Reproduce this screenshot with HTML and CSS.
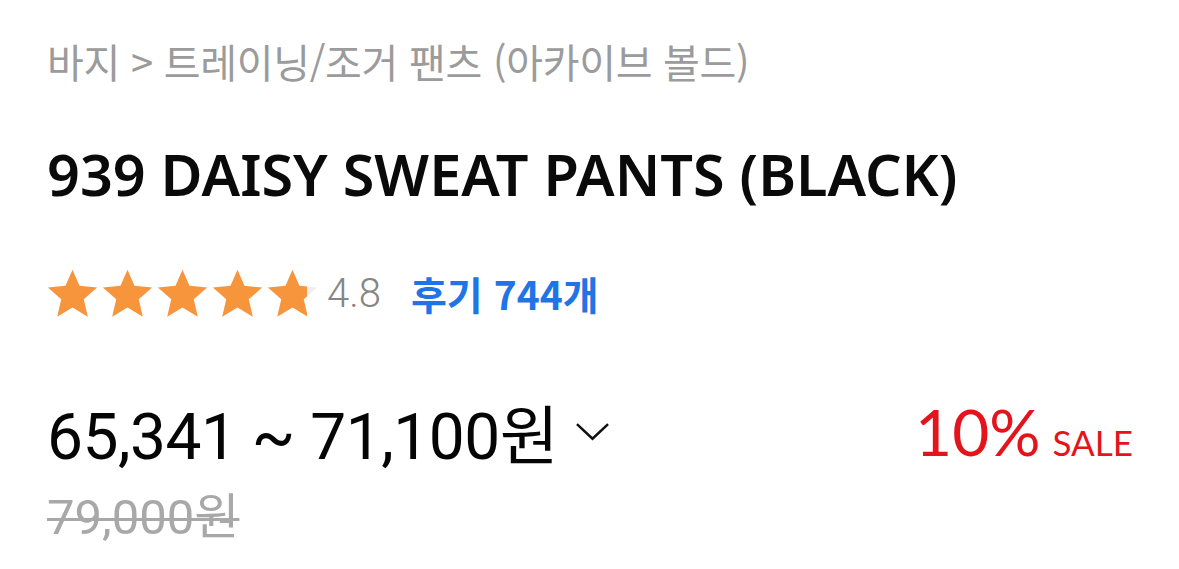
FILE: index.html
```html
<!DOCTYPE html>
<html lang="ko">
<head>
<meta charset="utf-8">
<link rel="stylesheet" href="styles.css">
</head>
<body>
<div class="page">
  <div class="crumb">바지 &gt; 트레이닝/조거 팬츠 (아카이브 볼드)</div>
  <h1 class="title">939 DAISY SWEAT PANTS (BLACK)</h1>
  <div class="rating">
    <div class="stars">
      <svg class="star" viewBox="0 0 24 24"><path d="M12 0.8l3.3 7.6 8.3.8-6.3 5.5 1.9 8.2L12 18.6l-7.2 4.3 1.9-8.2L.4 9.2l8.3-.8z" fill="#f7953d"/></svg>
      <svg class="star" viewBox="0 0 24 24"><path d="M12 0.8l3.3 7.6 8.3.8-6.3 5.5 1.9 8.2L12 18.6l-7.2 4.3 1.9-8.2L.4 9.2l8.3-.8z" fill="#f7953d"/></svg>
      <svg class="star" viewBox="0 0 24 24"><path d="M12 0.8l3.3 7.6 8.3.8-6.3 5.5 1.9 8.2L12 18.6l-7.2 4.3 1.9-8.2L.4 9.2l8.3-.8z" fill="#f7953d"/></svg>
      <svg class="star" viewBox="0 0 24 24"><path d="M12 0.8l3.3 7.6 8.3.8-6.3 5.5 1.9 8.2L12 18.6l-7.2 4.3 1.9-8.2L.4 9.2l8.3-.8z" fill="#f7953d"/></svg>
      <svg class="star" viewBox="0 0 24 24"><defs><linearGradient id="part" x1="0" x2="1" y1="0" y2="0"><stop offset="0.8" stop-color="#f7953d"/><stop offset="0.8" stop-color="#efefef"/></linearGradient></defs><path d="M12 0.8l3.3 7.6 8.3.8-6.3 5.5 1.9 8.2L12 18.6l-7.2 4.3 1.9-8.2L.4 9.2l8.3-.8z" fill="url(#part)"/></svg>
    </div>
    <span class="score">4.8</span>
    <span class="reviews">후기 744개</span>
  </div>
  <div class="price-row">
    <div class="price">
      <span class="range">65,341 ~ 71,100원</span>
      <svg class="chev" viewBox="0 0 36 24"><polyline points="2,5 18,20 34,5" fill="none" stroke="#111" stroke-width="2.6"/></svg>
    </div>
    <div class="sale"><span class="pct">10%</span><span class="sale-word">SALE</span></div>
  </div>
  <div class="old">79,000원</div>
</div>
</body>
</html>
```

FILE: styles.css
```css
html, body {
  margin: 0;
  padding: 0;
  background: #fff;
}
.page {
  width: 1179px;
  height: 569px;
  box-sizing: border-box;
  padding: 36px 46px 0 47px;
  display: flex;
  flex-direction: column;
  overflow: hidden;
}
.crumb {
  font-family: "Noto Sans CJK KR", "Noto Sans", sans-serif;
  font-size: 40px;
  line-height: 50px;
  color: #9b9b9b;
  letter-spacing: -0.3px;
}
.title {
  margin: 54px 0 0;
  font-family: "Noto Sans", "Noto Sans CJK KR", sans-serif;
  font-weight: 600;
  font-size: 57.5px;
  line-height: 68px;
  color: #0a0a0a;
  letter-spacing: 0;
}
.rating {
  margin-top: 60px;
  display: flex;
  align-items: center;
  height: 50px;
}
.stars {
  display: flex;
  gap: 4px;
}
.star {
  width: 51px;
  height: 51px;
  display: block;
}
.score {
  margin-left: 9px;
  font-family: Roboto, "Noto Sans", sans-serif;
  font-weight: 300;
  font-size: 40px;
  color: #858585;
}
.reviews {
  margin-left: 30px;
  font-family: "Noto Sans CJK KR", sans-serif;
  font-weight: 700;
  font-size: 39px;
  color: #1f74e6;
}
.price-row {
  margin-top: 81px;
  display: flex;
  justify-content: space-between;
  align-items: center;
  height: 64px;
}
.price {
  display: flex;
  align-items: center;
}
.range {
  font-family: Roboto, "Noto Sans CJK KR", sans-serif;
  font-size: 64px;
  color: #050505;
  letter-spacing: -0.5px;
}
.chev {
  margin-left: 17px;
  width: 35px;
  height: 24px;
  display: block;
}
.sale {
  display: flex;
  align-items: baseline;
}
.pct {
  font-family: Lato, Roboto, sans-serif;
  font-size: 64px;
  color: #e3141b;
}
.sale-word {
  margin-left: 12px;
  font-family: Lato, Roboto, sans-serif;
  font-size: 35px;
  color: #e3141b;
}
.old {
  margin-top: 27px;
  font-family: Roboto, "Noto Sans CJK KR", sans-serif;
  font-size: 49px;
  line-height: 56px;
  color: #a8a8a8;
  text-decoration: line-through;
  text-decoration-thickness: 3px;
}
```
